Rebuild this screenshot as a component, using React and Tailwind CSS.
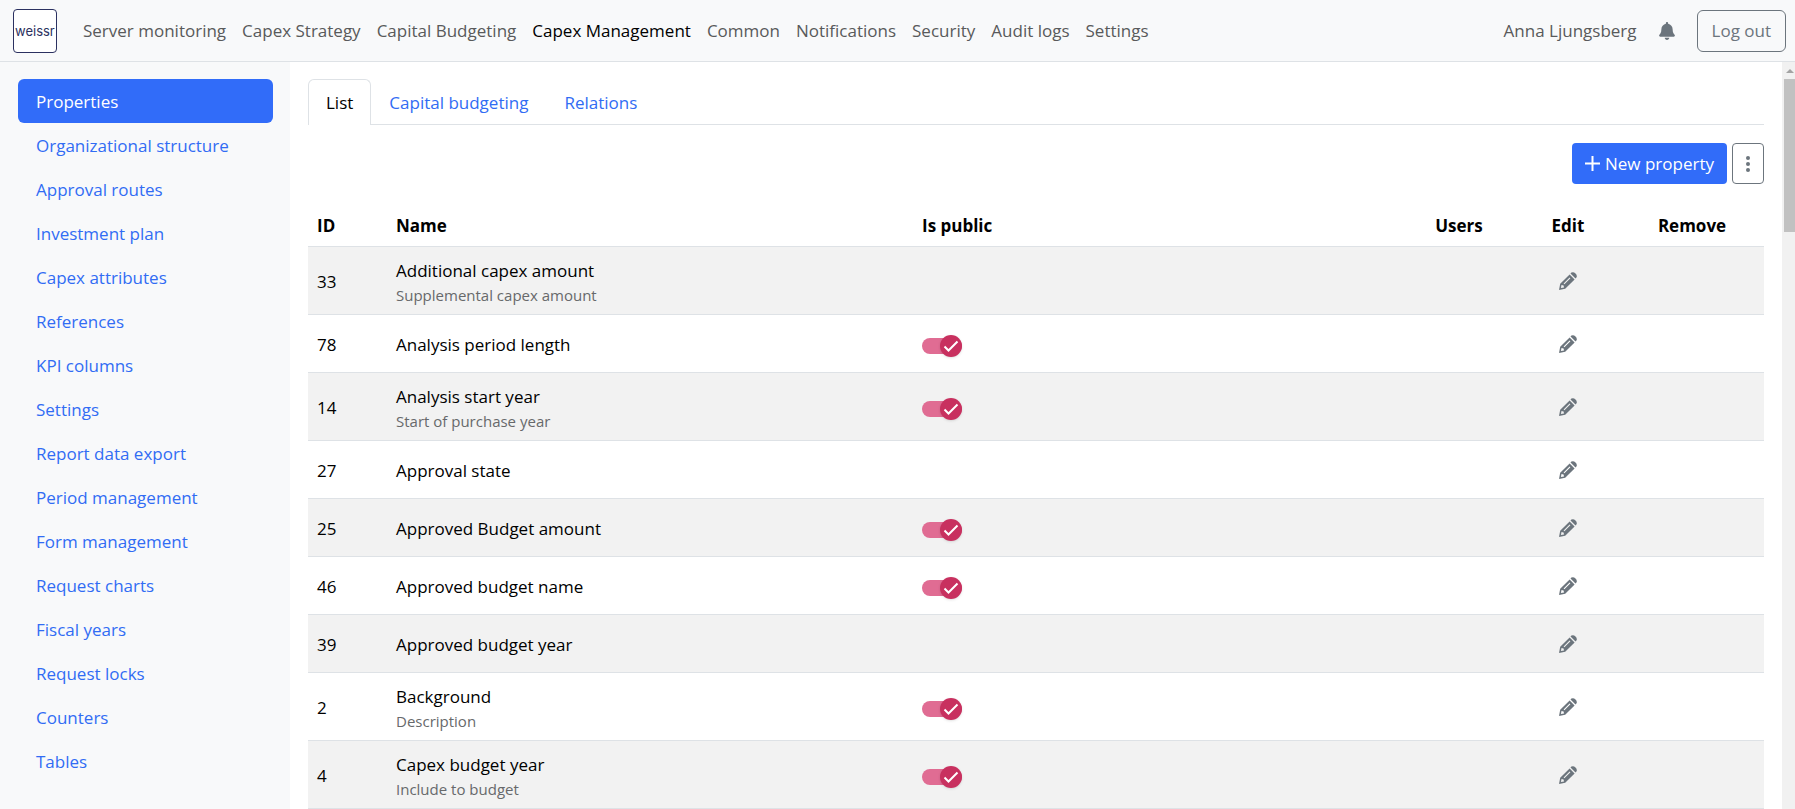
import { useState } from 'react';
import { FaBell } from 'react-icons/fa';

const navItems = [
  'Server monitoring',
  'Capex Strategy',
  'Capital Budgeting',
  'Capex Management',
  'Common',
  'Notifications',
  'Security',
  'Audit logs',
  'Settings',
];

const sidebarItems = [
  'Properties',
  'Organizational structure',
  'Approval routes',
  'Investment plan',
  'Capex attributes',
  'References',
  'KPI columns',
  'Settings',
  'Report data export',
  'Period management',
  'Form management',
  'Request charts',
  'Fiscal years',
  'Request locks',
  'Counters',
  'Tables',
];

const tabs = ['List', 'Capital budgeting', 'Relations'];

const initialProperties = [
  { id: 33, name: 'Additional capex amount', description: 'Supplemental capex amount' },
  { id: 78, name: 'Analysis period length', isPublic: true },
  { id: 14, name: 'Analysis start year', description: 'Start of purchase year', isPublic: true },
  { id: 27, name: 'Approval state' },
  { id: 25, name: 'Approved Budget amount', isPublic: true },
  { id: 46, name: 'Approved budget name', isPublic: true },
  { id: 39, name: 'Approved budget year' },
  { id: 2, name: 'Background', description: 'Description', isPublic: true },
  { id: 4, name: 'Capex budget year', description: 'Include to budget', isPublic: true },
];

function PencilIcon() {
  return (
    <svg viewBox="0 0 18 18" className="h-[18px] w-[18px] fill-[#6c757d]" aria-hidden="true">
      <path
        fillRule="evenodd"
        d="M0 18 1.2 11.8 10.6 2.4 15.6 7.4 6.2 16.8ZM1.9 16.1 5 15.5 4.6 13.4 2.5 13ZM4.6 11.4 5.4 12.2 11.4 6.2 10.6 5.4Z"
      />
      <path d="M11.5 1.5 12.4.6Q14.4-.6 16.5 1.5T17.4 5.6L16.5 6.5Z" />
    </svg>
  );
}

function Toggle({ label, checked, onChange }) {
  return (
    <label className="relative flex h-[22px] w-10 cursor-pointer items-center">
      <input type="checkbox" className="peer sr-only" aria-label={label} checked={checked} onChange={onChange} />
      <span className="h-4 w-10 rounded-full bg-gray-300 peer-checked:bg-[#e06c93]" />
      <span className="absolute left-0 flex h-[22px] w-[22px] items-center justify-center rounded-full bg-gray-500 shadow-sm peer-checked:left-[18px] peer-checked:bg-[#c8305f]">
        <svg viewBox="0 0 16 16" className="h-4 w-4 fill-none stroke-white stroke-2" aria-hidden="true">
          <path d="M1.5 8.5 5.5 12.5 14.5 3.5" />
        </svg>
      </span>
    </label>
  );
}

function Navbar() {
  return (
    <header className="flex h-[62px] shrink-0 items-center border-b border-[#dee2e6] bg-[#f8f9fa] pr-[9px] pl-[13px]">
      <a
        href="#home"
        className="flex h-11 w-11 items-center rounded-[4px] border border-[#2b3160] bg-white pl-px font-[Inter] text-[13px] text-[#2b3160]"
      >
        weissr
      </a>
      <nav className="ml-[18px] flex">
        {navItems.map((item) => (
          <a
            key={item}
            href="#nav"
            className={`px-2 whitespace-nowrap ${item === 'Capex Management' ? 'text-black' : 'text-[#595a5b]'}`}
          >
            {item}
          </a>
        ))}
      </nav>
      <div className="ml-auto flex items-center">
        <a href="#profile" className="whitespace-nowrap text-[#595a5b]">Anna Ljungsberg</a>
        <button aria-label="Notifications" className="mx-[22px] text-[#6c757d]">
          <FaBell className="h-[18px] w-4" />
        </button>
        <button className="h-[42px] rounded-md border border-[#6c757d] px-[14px] whitespace-nowrap text-[#6c757d]">Log out</button>
      </div>
    </header>
  );
}

function Sidebar() {
  return (
    <aside className="w-[290px] shrink-0 bg-[#f8f9fa] pt-[17px] pr-[17px] pl-[18px]">
      <nav className="flex flex-col">
        {sidebarItems.map((item) => (
          <a
            key={item}
            href="#section"
            className={`flex h-11 items-center rounded-md px-[18px] pt-0.5 ${
              item === 'Properties' ? 'bg-[#316cf9] text-white' : 'text-[#316cf4]'
            }`}
          >
            {item}
          </a>
        ))}
      </nav>
    </aside>
  );
}

function PropertyTable() {
  const [properties, setProperties] = useState(initialProperties);

  const togglePublic = (id) => {
    setProperties(properties.map((p) => (p.id === id ? { ...p, isPublic: !p.isPublic } : p)));
  };

  return (
    <table className="mt-[18px] w-full table-fixed border-collapse text-left text-black">
      <thead>
        <tr className="h-11 border-b border-[#dee2e6]">
          <th className="w-[79px] px-[9px] pt-1 font-bold">ID</th>
          <th className="px-[9px] pt-1 font-bold">Name</th>
          <th className="w-[489px] px-[9px] pt-1 font-bold">Is public</th>
          <th className="w-[114px] pt-1 text-center font-bold">Users</th>
          <th className="w-[104px] pt-1 text-center font-bold">Edit</th>
          <th className="w-36 pt-1 text-center font-bold">Remove</th>
        </tr>
      </thead>
      <tbody>
        {properties.map((p) => (
          <tr key={p.id} className={`border-b border-[#dee2e6] odd:bg-[#f2f2f2] ${p.description ? 'h-[68px]' : 'h-[58px]'}`}>
            <td className="px-[9px] pt-1">{p.id}</td>
            <td className="px-[9px] pt-1">
              {p.name}
              {p.description && <div className="text-[15px] leading-[22px] text-[#67696b]">{p.description}</div>}
            </td>
            <td className="px-[9px] pt-[6px]">
              {p.isPublic !== undefined && (
                <Toggle label={`${p.name} is public`} checked={p.isPublic} onChange={() => togglePublic(p.id)} />
              )}
            </td>
            <td />
            <td className="text-center">
              <button aria-label={`Edit ${p.name}`} className="align-middle">
                <PencilIcon />
              </button>
            </td>
            <td />
          </tr>
        ))}
      </tbody>
    </table>
  );
}

function Scrollbar() {
  return (
    <div className="flex w-[13px] shrink-0 flex-col items-end bg-[#f1f1f1]" aria-hidden="true">
      <div className="flex h-[17px] w-[11px] items-center justify-center">
        <svg viewBox="0 0 8 4" className="h-1 w-2 fill-[#a3a3a3]">
          <path d="M0 4 4 0 8 4Z" />
        </svg>
      </div>
      <div className="h-[153px] w-[11px] bg-[#c1c1c1]" />
    </div>
  );
}

export default function App() {
  const [activeTab, setActiveTab] = useState('List');

  return (
    <div className="flex h-screen flex-col overflow-hidden bg-white font-['Open_Sans',sans-serif] text-[17px] leading-[26px]">
      <Navbar />
      <div className="flex min-h-0 flex-1">
        <Sidebar />
        <main className="min-w-0 flex-1 overflow-hidden px-[18px] pt-[17px]">
          <div className="flex border-b border-[#dee2e6]" role="tablist">
            {tabs.map((tab) => (
              <button
                key={tab}
                role="tab"
                aria-selected={activeTab === tab}
                onClick={() => setActiveTab(tab)}
                className={`-mb-px h-[46px] rounded-t-md border border-b-0 px-[17px] ${
                  activeTab === tab ? 'border-[#dee2e6] bg-white text-black' : 'border-transparent text-[#316cf4]'
                }`}
              >
                {tab}
              </button>
            ))}
          </div>
          {/* Toolbar */}
          <div className="mt-[18px] flex justify-end gap-[5px]">
            <button className="flex h-[41px] items-center gap-[5px] rounded-[4px] bg-[#316cf9] px-[13px] text-white">
              <svg viewBox="0 0 15 15" className="h-[15px] w-[15px] fill-none stroke-white stroke-2" aria-hidden="true">
                <path d="M7.5 0V15M0 7.5H15" />
              </svg>
              New property
            </button>
            <button aria-label="More actions" className="flex h-[41px] w-8 items-center justify-center rounded-[4px] border border-[#6c757d]">
              <svg viewBox="0 0 4 16" className="h-4 w-1 fill-[#6c757d]" aria-hidden="true">
                <circle cx="2" cy="2" r="2" />
                <circle cx="2" cy="8" r="2" />
                <circle cx="2" cy="14" r="2" />
              </svg>
            </button>
          </div>
          <PropertyTable />
        </main>
        <Scrollbar />
      </div>
    </div>
  );
}
